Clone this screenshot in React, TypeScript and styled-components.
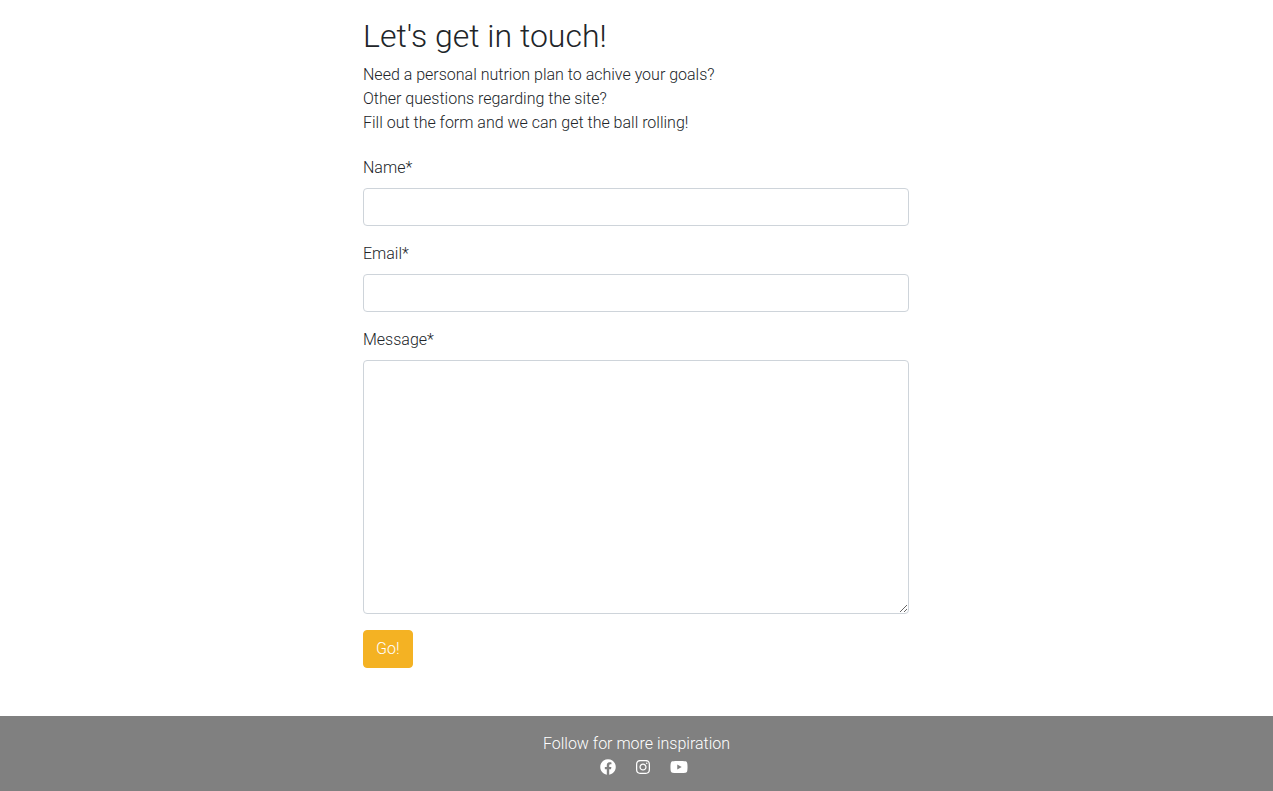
import React from "react";
import styled, { createGlobalStyle } from "styled-components";
import { FaFacebook, FaInstagram, FaYoutube } from "react-icons/fa";

const GlobalStyle = createGlobalStyle`
  *, *::before, *::after { box-sizing: border-box; }
  body {
    margin: 0;
    background: #fff;
    color: #212529;
    font-family: Roboto, sans-serif;
    font-size: 16px;
    font-weight: 300;
    line-height: 24px;
  }
`;

const Page = styled.div`
  display: flex;
  flex-direction: column;
  min-height: 100vh;
`;

const Main = styled.main`
  flex: 1;
  width: 100%;
  max-width: 571px;
  margin: 0 auto;
  padding: 17px 12px 48px;
`;

const Title = styled.h1`
  margin: 0 0 8px;
  font-size: 32px;
  font-weight: 300;
  line-height: 38px;
`;

const Intro = styled.p`
  margin: 0 0 21px;
`;

const Form = styled.form`
  max-width: 546px;
`;

const Field = styled.div`
  display: flex;
  flex-direction: column;
  margin-bottom: 16px;
`;

const Label = styled.label`
  margin-bottom: 8px;
`;

const Input = styled.input`
  width: 100%;
  height: 38px;
  padding: 6px 12px;
  border: 1px solid #ced4da;
  border-radius: 4px;
  background: #fff;
  color: inherit;
  font: inherit;
`;

const TextArea = styled.textarea`
  width: 100%;
  height: 254px;
  padding: 6px 12px;
  border: 1px solid #ced4da;
  border-radius: 4px;
  background: #fff;
  color: inherit;
  font: inherit;
  resize: vertical;
`;

const SubmitButton = styled.button`
  padding: 6px 12px;
  border: 1px solid #f4b223;
  border-radius: 4px;
  background: #f4b223;
  color: #fff;
  font: inherit;
  cursor: pointer;
`;

const Footer = styled.footer`
  padding: 16px 0 13px;
  background: #808080;
  color: #fff;
  text-align: center;
`;

const FooterText = styled.p`
  margin: 0;
`;

const SocialLinks = styled.nav`
  display: flex;
  justify-content: center;
  gap: 20px;
  height: 22px;
  padding-left: 15px;
`;

const SocialLink = styled.a<{ $iconWidth: number }>`
  display: flex;
  align-items: center;
  color: #fff;

  svg {
    width: ${({ $iconWidth }) => $iconWidth}px;
    height: 16px;
  }
`;

export default function App() {
  return (
    <>
      <GlobalStyle />
      <Page>
        <Main>
          <Title>Let's get in touch!</Title>
          <Intro>
            Need a personal nutrion plan to achive your goals?
            <br />
            Other questions regarding the site?
            <br />
            Fill out the form and we can get the ball rolling!
          </Intro>
          <Form onSubmit={(event) => event.preventDefault()}>
            <Field>
              <Label htmlFor="name">Name*</Label>
              <Input id="name" type="text" required />
            </Field>
            <Field>
              <Label htmlFor="email">Email*</Label>
              <Input id="email" type="email" required />
            </Field>
            <Field>
              <Label htmlFor="message">Message*</Label>
              <TextArea id="message" required />
            </Field>
            <SubmitButton type="submit">Go!</SubmitButton>
          </Form>
        </Main>
        <Footer>
          <FooterText>Follow for more inspiration</FooterText>
          <SocialLinks aria-label="Social media">
            <SocialLink href="#facebook" aria-label="Facebook" $iconWidth={16}>
              <FaFacebook />
            </SocialLink>
            <SocialLink href="#instagram" aria-label="Instagram" $iconWidth={14}>
              <FaInstagram />
            </SocialLink>
            <SocialLink href="#youtube" aria-label="YouTube" $iconWidth={18}>
              <FaYoutube />
            </SocialLink>
          </SocialLinks>
        </Footer>
      </Page>
    </>
  );
}
